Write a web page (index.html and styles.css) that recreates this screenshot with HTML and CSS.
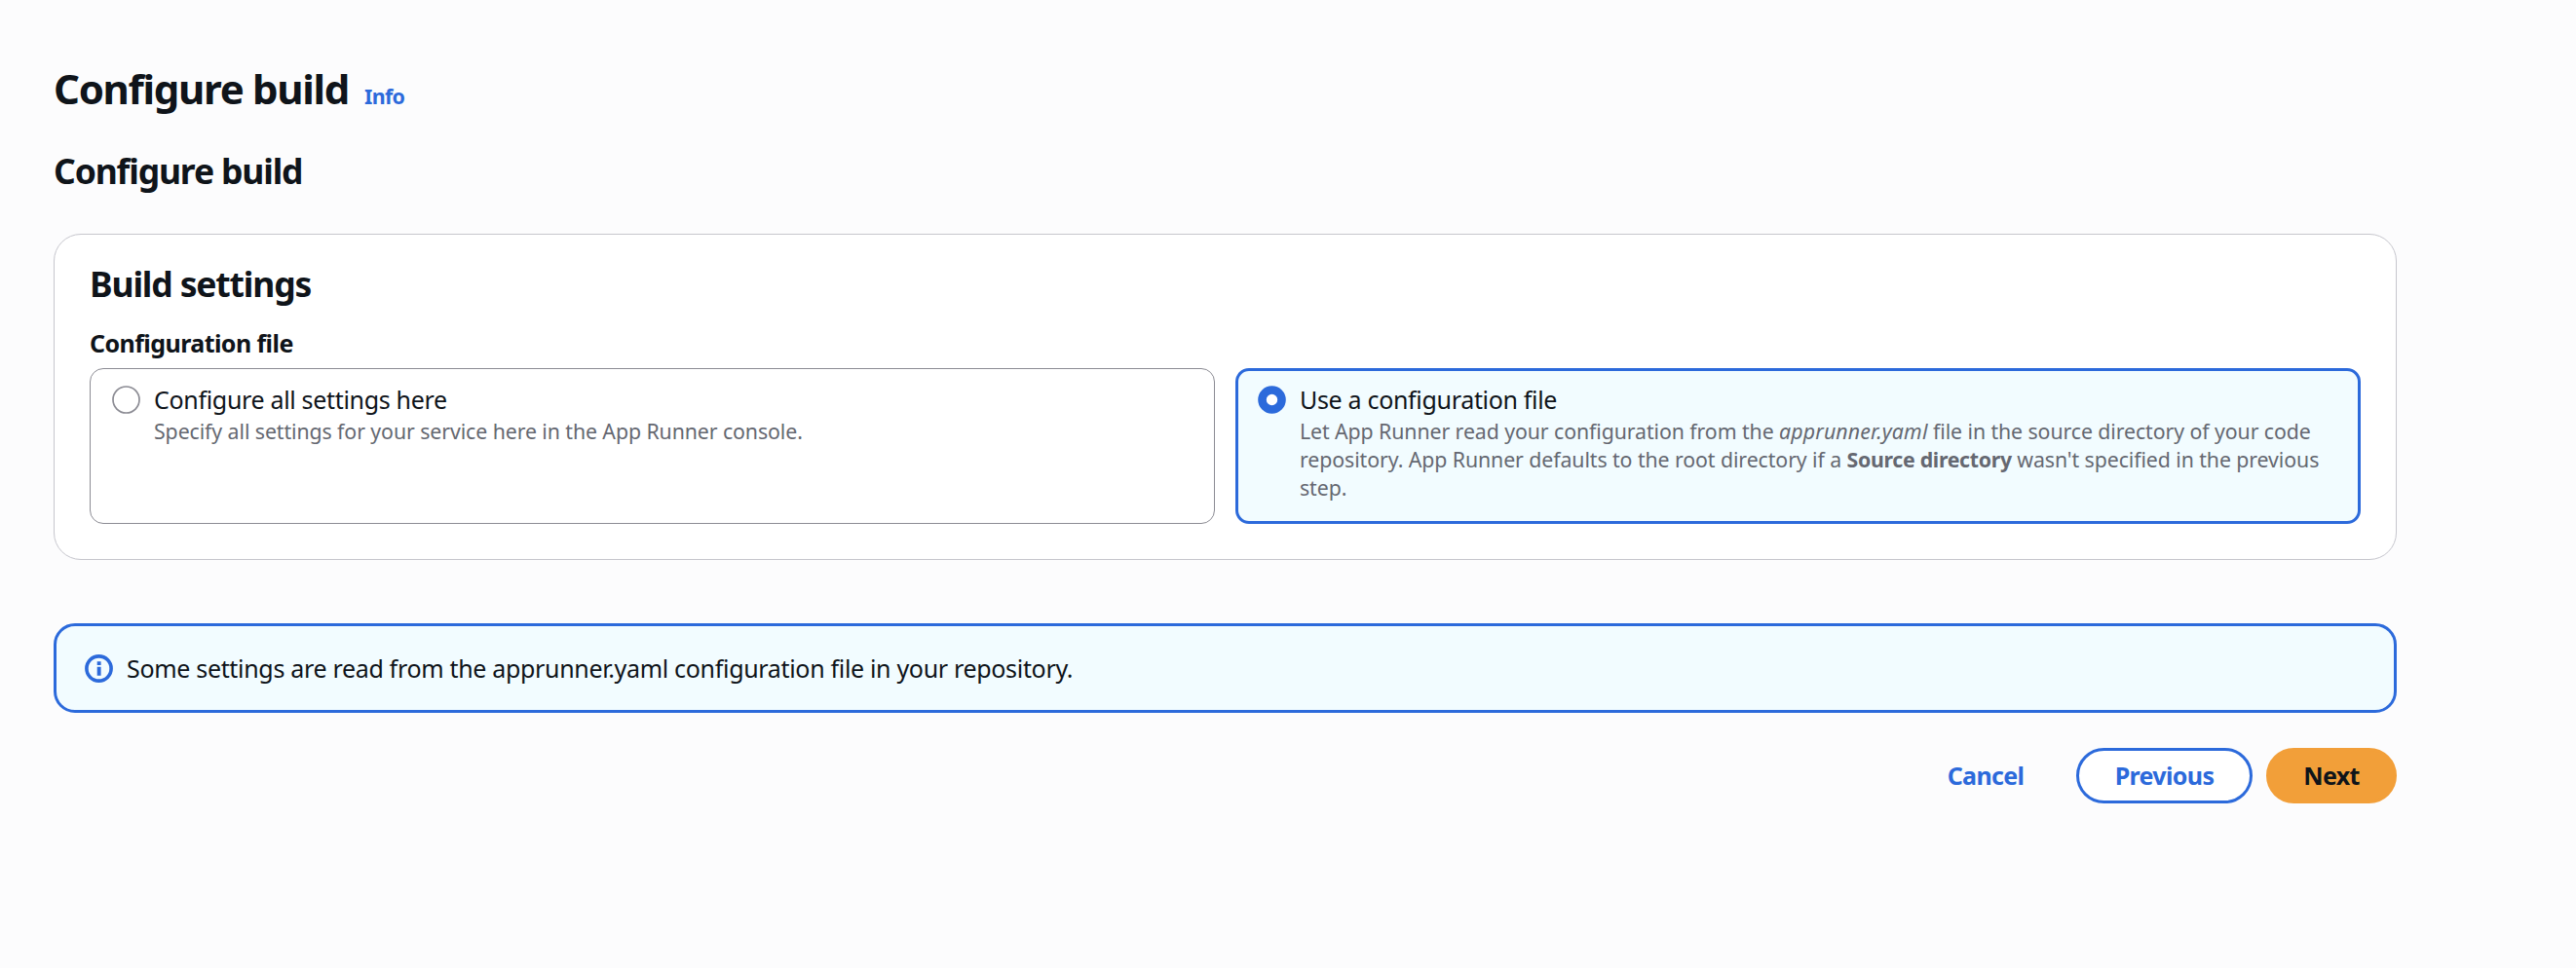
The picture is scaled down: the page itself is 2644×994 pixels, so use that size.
FILE: index.html
```
<!DOCTYPE html>
<html lang="en">
<head>
<meta charset="utf-8">
<title>Configure build</title>
<link rel="stylesheet" href="styles.css">
</head>
<body>
<main class="page">
  <header class="page-header">
    <h1 class="page-title">Configure build</h1>
    <a class="info-link">Info</a>
  </header>
  <h2 class="section-title">Configure build</h2>
  <section class="card">
    <h2 class="card-title">Build settings</h2>
    <div class="field-label">Configuration file</div>
    <div class="tiles">
      <label class="tile">
        <svg class="radio" viewBox="0 0 29 29"><circle cx="14.5" cy="14.5" r="13.5" fill="#fff" stroke="#8c8c94" stroke-width="1.7"/></svg>
        <span class="tile-body">
          <span class="tile-title">Configure all settings here</span>
          <span class="tile-desc">Specify all settings for your service here in the App Runner console.</span>
        </span>
      </label>
      <label class="tile tile-selected">
        <svg class="radio" viewBox="0 0 29 29"><circle cx="14.5" cy="14.5" r="10" fill="#fff" stroke="#2c6adb" stroke-width="8.6"/></svg>
        <span class="tile-body">
          <span class="tile-title">Use a configuration file</span>
          <span class="tile-desc">Let App Runner read your configuration from the <em class="file-name">apprunner.yaml</em> file in the source directory of your code repository. App Runner defaults to the root directory if a <strong class="term">Source directory</strong> wasn't specified in the previous step.</span>
        </span>
      </label>
    </div>
  </section>
  <div class="alert">
    <svg class="alert-icon" viewBox="0 0 29 29"><circle cx="14.5" cy="14.5" r="12.6" fill="none" stroke="#2c6adb" stroke-width="3.6"/><path d="M12.7 7.3h3.9v3.6h-3.9zM12.7 12.7h3.9v9h-3.9z" fill="#2c6adb"/></svg>
    <span class="alert-text">Some settings are read from the apprunner.yaml configuration file in your repository.</span>
  </div>
  <div class="actions">
    <button class="button button-link">Cancel</button>
    <button class="button button-normal">Previous</button>
    <button class="button button-primary">Next</button>
  </div>
</main>
</body>
</html>
```
FILE: styles.css
```
* { box-sizing: border-box; }

body {
  margin: 0;
  background: #fcfcfd;
  color: #0f141a;
  font-family: "Noto Sans", sans-serif;
  font-size: 25px;
}

.page {
  width: 2405px;
  margin-left: 55px;
  padding-top: 64px;
}

.page-header {
  display: flex;
  align-items: baseline;
  gap: 16px;
}

.page-title,
.section-title,
.card-title {
  margin: 0;
  font-weight: 700;
}

.page-title {
  font-size: 42px;
  line-height: 54px;
  letter-spacing: -1.3px;
}

.info-link {
  color: #2c6adb;
  font-size: 21.4px;
  font-weight: 700;
  letter-spacing: -0.7px;
}

.section-title,
.card-title {
  font-size: 35.5px;
  line-height: 44px;
  letter-spacing: -1.15px;
}

.section-title { margin-top: 35px; }

.card {
  margin-top: 43px;
  padding: 28px 36px 36px;
  border: 1px solid #c6c6cd;
  border-radius: 28px;
  background: #fff;
}

.field-label {
  margin-top: 21px;
  line-height: 36px;
  font-weight: 700;
  letter-spacing: -0.57px;
}

.tiles {
  display: grid;
  grid-template-columns: 1fr 1fr;
  gap: 21px;
  margin-top: 8px;
}

.tile {
  display: flex;
  gap: 14px;
  height: 160px;
  padding: 13px 27px 0 22px;
  border: 1px solid #8c8c94;
  border-radius: 14px;
}

.tile-selected {
  padding: 11px 25px 0 20px;
  border: 3px solid #2c6adb;
  background: #f2fcff;
}

.radio {
  flex: none;
  width: 29px;
  height: 29px;
  margin-top: 4px;
}

.tile-title {
  display: block;
  line-height: 36px;
  letter-spacing: -0.32px;
}

.tile-desc {
  display: block;
  color: #656871;
  font-size: 21.3px;
  line-height: 29px;
  letter-spacing: -0.08px;
}

.file-name {
  font-style: italic;
  letter-spacing: 0.15px;
}

.term {
  font-weight: 700;
  letter-spacing: -0.3px;
}

.alert {
  display: flex;
  align-items: center;
  gap: 14px;
  height: 92px;
  margin-top: 65px;
  padding: 0 29px;
  border: 3px solid #2c6adb;
  border-radius: 22px;
  background: #f2fcff;
}

.alert-icon {
  flex: none;
  width: 29px;
  height: 29px;
}

.alert-text { letter-spacing: -0.32px; }

.actions {
  display: flex;
  justify-content: flex-end;
  gap: 14px;
  margin-top: 36px;
}

.button {
  height: 57px;
  padding: 0 0 2px;
  border: 3px solid transparent;
  border-radius: 29px;
  background: none;
  font: 700 25px "Noto Sans", sans-serif;
  letter-spacing: -0.65px;
}

.button-link {
  width: 158px;
  color: #2c6adb;
}

.button-normal {
  width: 181px;
  border-color: #2c6adb;
  background: #fff;
  color: #2c6adb;
}

.button-primary {
  width: 134px;
  border-color: #f29f39;
  background: #f29f39;
  color: #0f141a;
}
```
